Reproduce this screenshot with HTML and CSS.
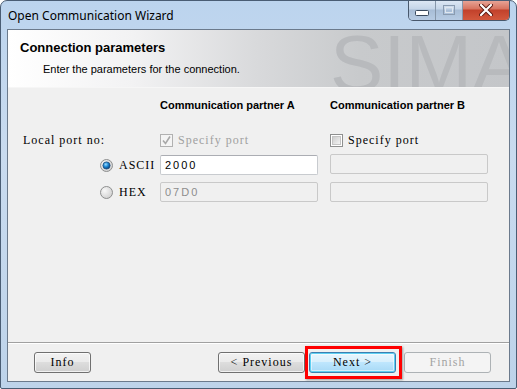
FILE: index.html
```html
<!DOCTYPE html>
<html lang="en">
<head>
    <meta charset="UTF-8">
    <title>Open Communication Wizard</title>
    <link rel="stylesheet" href="styles.css">
</head>
<body>
    <div class="window">
        <div class="titlebar">
            <span class="title">Open Communication Wizard</span>
            <div class="caption-buttons">
                <div class="cap cap-min">
                    <svg width="14" height="6" viewBox="0 0 14 6"><rect x="0.5" y="0.5" width="13" height="5" rx="1" fill="#fff" stroke="#3a4a5e"/></svg>
                </div>
                <div class="cap cap-max">
                    <svg width="12" height="10" viewBox="0 0 12 10"><rect x="0.5" y="0.5" width="11" height="9" fill="none" stroke="#8a9bb0"/><rect x="2.5" y="2.5" width="7" height="5" fill="none" stroke="#dfe6ee"/></svg>
                </div>
                <div class="cap cap-close">
                    <svg width="14" height="12" viewBox="0 0 14 12"><path d="M2 1 L12 11 M12 1 L2 11" stroke="#5a1a12" stroke-width="4" stroke-linecap="round"/><path d="M2 1 L12 11 M12 1 L2 11" stroke="#fff" stroke-width="2.2" stroke-linecap="round"/></svg>
                </div>
            </div>
        </div>

        <div class="client">
            <div class="banner">
                <span class="watermark">SIMATIC</span>
                <h1>Connection parameters</h1>
                <p>Enter the parameters for the connection.</p>
            </div>

            <div class="content">
                <div class="row row-heading">
                    <span class="col-title col-a">Communication partner A</span>
                    <span class="col-title col-b">Communication partner B</span>
                </div>

                <div class="row row-port">
                    <span class="label">Local port no:</span>
                    <label class="check disabled col-a">
                        <svg width="13" height="13" viewBox="0 0 13 13"><rect x="0.5" y="0.5" width="12" height="12" fill="#f4f4f4" stroke="#b1b1b1"/><path d="M3 6.5 L5.5 9.5 L10 2.5" fill="none" stroke="#a8a8a8" stroke-width="1.6"/></svg>
                        Specify port
                    </label>
                    <label class="check col-b">
                        <svg width="13" height="13" viewBox="0 0 13 13"><defs><linearGradient id="cb" x1="0" y1="0" x2="1" y2="1"><stop offset="0" stop-color="#cbcbcb"/><stop offset="1" stop-color="#f6f6f6"/></linearGradient></defs><rect x="0.5" y="0.5" width="12" height="12" fill="#fff" stroke="#8e8f8f"/><rect x="2.5" y="2.5" width="8" height="8" fill="url(#cb)" stroke="#c4c4c4"/></svg>
                        Specify port
                    </label>
                </div>

                <div class="row row-ascii">
                    <label class="radio">
                        <svg width="13" height="13" viewBox="0 0 13 13"><defs><radialGradient id="rb" cx="0.35" cy="0.35" r="0.7"><stop offset="0" stop-color="#f8f8f8"/><stop offset="1" stop-color="#d0d0d0"/></radialGradient><radialGradient id="rd" cx="0.4" cy="0.35" r="0.65"><stop offset="0" stop-color="#9fdcff"/><stop offset="0.5" stop-color="#1d8ad6"/><stop offset="1" stop-color="#0a3f7a"/></radialGradient></defs><circle cx="6.5" cy="6.5" r="6" fill="url(#rb)" stroke="#8e8f8f"/><circle cx="6.5" cy="6.5" r="3.6" fill="url(#rd)" stroke="#214f7f" stroke-width="0.8"/></svg>
                        ASCII
                    </label>
                    <input class="field col-a" type="text" value="2000">
                    <input class="field field-b col-b" type="text" disabled>
                </div>

                <div class="row row-hex">
                    <label class="radio">
                        <svg width="13" height="13" viewBox="0 0 13 13"><defs><radialGradient id="rb2" cx="0.35" cy="0.35" r="0.7"><stop offset="0" stop-color="#f8f8f8"/><stop offset="1" stop-color="#d0d0d0"/></radialGradient></defs><circle cx="6.5" cy="6.5" r="6" fill="url(#rb2)" stroke="#8e8f8f"/></svg>
                        HEX
                    </label>
                    <input class="field col-a" type="text" value="07D0" disabled>
                    <input class="field col-b" type="text" disabled>
                </div>
            </div>

            <div class="footer">
                <button class="btn btn-info">Info</button>
                <div class="nav-buttons">
                    <button class="btn">&lt; Previous</button>
                    <span class="highlight"><button class="btn btn-focus">Next &gt;</button></span>
                    <button class="btn" disabled>Finish</button>
                </div>
            </div>
        </div>
    </div>
</body>
</html>
```

FILE: styles.css
```css
body {
    margin: 0;
    padding: 0;
    background-color: #fff;
}
.window {
    width: 517px;
    height: 389px;
    box-sizing: border-box;
    border: 1px solid #4a5d74;
    border-radius: 7px 7px 2px 2px;
    background: linear-gradient(180deg, #bcd4ee 0%, #c9dbef 40%, #bdd3ea 100%);
    display: flex;
    flex-direction: column;
    padding: 0 6px 6px 6px;
    overflow: hidden;
}
.titlebar {
    height: 28px;
    display: flex;
    justify-content: space-between;
    align-items: flex-start;
}
.title {
    font-family: "Noto Sans", sans-serif;
    font-size: 12px;
    color: #000;
    margin-top: 6px;
    margin-left: 1px;
}
.caption-buttons {
    display: flex;
    margin-top: -1px;
    height: 20px;
    border: 1px solid #48586c;
    border-top: none;
    border-radius: 0 0 5px 5px;
    overflow: hidden;
}
.cap {
    display: flex;
    align-items: center;
    justify-content: center;
    height: 20px;
}
.cap-min {
    width: 26px;
    border-right: 1px solid #8797aa;
    background: linear-gradient(180deg, #dfe9f5 0%, #c5d5e8 45%, #a8bdd6 50%, #b7cbe3 100%);
}
.cap-min svg {
    margin-top: 6px;
}
.cap-max {
    width: 26px;
    border-right: 1px solid #8797aa;
    background: linear-gradient(180deg, #dfe9f5 0%, #c5d5e8 45%, #a8bdd6 50%, #b7cbe3 100%);
}
.cap-close {
    width: 46px;
    background: linear-gradient(180deg, #e9a99c 0%, #d7735f 45%, #c2412b 50%, #d2583d 100%);
}
.client {
    flex: 1;
    display: flex;
    flex-direction: column;
    border: 1px solid #6b7a8c;
    background-color: #f0f0f0;
}
.banner {
    position: relative;
    height: 58px;
    box-sizing: border-box;
    padding: 10px 12px 0 12px;
    overflow: hidden;
    background: linear-gradient(90deg, #ffffff 0%, #f2f2f3 25%, #d8d9db 50%, #c8cacc 70%, #c4c6c9 100%);
    border-bottom: 1px solid #f6f6f6;
}
.watermark {
    position: absolute;
    left: 322px;
    top: -12px;
    font-family: "Liberation Sans", Arial, sans-serif;
    font-size: 80px;
    color: #b8babd;
    white-space: nowrap;
}
.banner h1 {
    position: relative;
    margin: 0;
    font-family: "Liberation Sans", Arial, sans-serif;
    font-size: 13px;
    font-weight: bold;
    color: #000;
    line-height: 16px;
}
.banner p {
    position: relative;
    margin: 7px 0 0 23px;
    font-family: "Liberation Sans", Arial, sans-serif;
    font-size: 11px;
    line-height: 13px;
    color: #000;
}
.content {
    flex: 1;
    padding: 10px 0 0 15px;
}
.row {
    display: grid;
    grid-template-columns: 77px 60px 158px 12px 158px;
    grid-template-areas: "label radio a gap b";
    align-items: center;
}
.label {
    grid-area: label;
    white-space: nowrap;
}
.radio {
    grid-area: radio;
}
.col-a {
    grid-area: a;
}
.col-b {
    grid-area: b;
}
.row-heading {
    height: 14px;
}
.col-title {
    font-family: "Liberation Sans", Arial, sans-serif;
    font-size: 11px;
    font-weight: bold;
    color: #000;
    white-space: nowrap;
}
.row-port {
    height: 20px;
    margin-top: 18px;
}
.row-ascii {
    height: 20px;
    margin-top: 5px;
}
.row-hex {
    height: 20px;
    margin-top: 7px;
}
.label, .check, .radio, .btn {
    font-family: "Liberation Serif", "Times New Roman", serif;
    font-size: 12px;
    letter-spacing: 1px;
    color: #000;
}
.check, .radio {
    display: flex;
    align-items: center;
    gap: 5px;
    white-space: nowrap;
}
.check.disabled {
    color: #a0a0a0;
}
.radio {
    gap: 6px;
}
.field {
    box-sizing: border-box;
    width: 158px;
    height: 20px;
    margin: 0;
    padding: 0 4px;
    border: 1px solid #c8cbcf;
    border-top-color: #abadb3;
    border-radius: 2px;
    background-color: #fff;
    outline: none;
    font-family: "Liberation Sans", Arial, sans-serif;
    font-size: 11px;
    letter-spacing: 2px;
    color: #000;
}
.field:disabled {
    background-color: #f0f0f0;
    border-color: #c9c9c9;
    color: #8d8d8d;
}
.field-b {
    margin-top: -3px;
}
.footer {
    height: 39px;
    box-sizing: border-box;
    border-top: 1px solid #a0a0a0;
    box-shadow: inset 0 1px 0 #ffffff;
    display: flex;
    justify-content: space-between;
    align-items: flex-start;
    padding: 9px 18px 0 26px;
}
.nav-buttons {
    display: flex;
    align-items: flex-start;
}
.btn {
    height: 21px;
    width: 87px;
    padding: 0;
    border: 1px solid #707070;
    border-radius: 3px;
    background: linear-gradient(180deg, #f2f2f2 0%, #ebebeb 45%, #dddddd 50%, #cfcfcf 100%);
    box-shadow: inset 0 0 0 1px rgba(255, 255, 255, 0.7);
    cursor: pointer;
}
.btn-info {
    width: 57px;
}
.btn:disabled {
    color: #a3a3a3;
    border-color: #adb2b5;
    background: #f4f4f4;
    box-shadow: none;
}
.highlight {
    position: relative;
    display: flex;
    margin: 0 8px 0 4px;
}
.highlight::after {
    content: "";
    position: absolute;
    left: -4px;
    right: -6px;
    top: -6px;
    bottom: -6px;
    border: 3px solid #ff0000;
    box-shadow: 1px 1px 2px rgba(0, 0, 0, 0.35);
}
.btn-focus {
    border-color: #3c7fb1;
    box-shadow: inset 0 0 0 1px #5fd0f2, inset 0 0 0 2px rgba(255, 255, 255, 0.5);
    background: linear-gradient(180deg, #eaf6fd 0%, #d9f0fc 45%, #bee6fd 50%, #a7d9f5 100%);
}
```
